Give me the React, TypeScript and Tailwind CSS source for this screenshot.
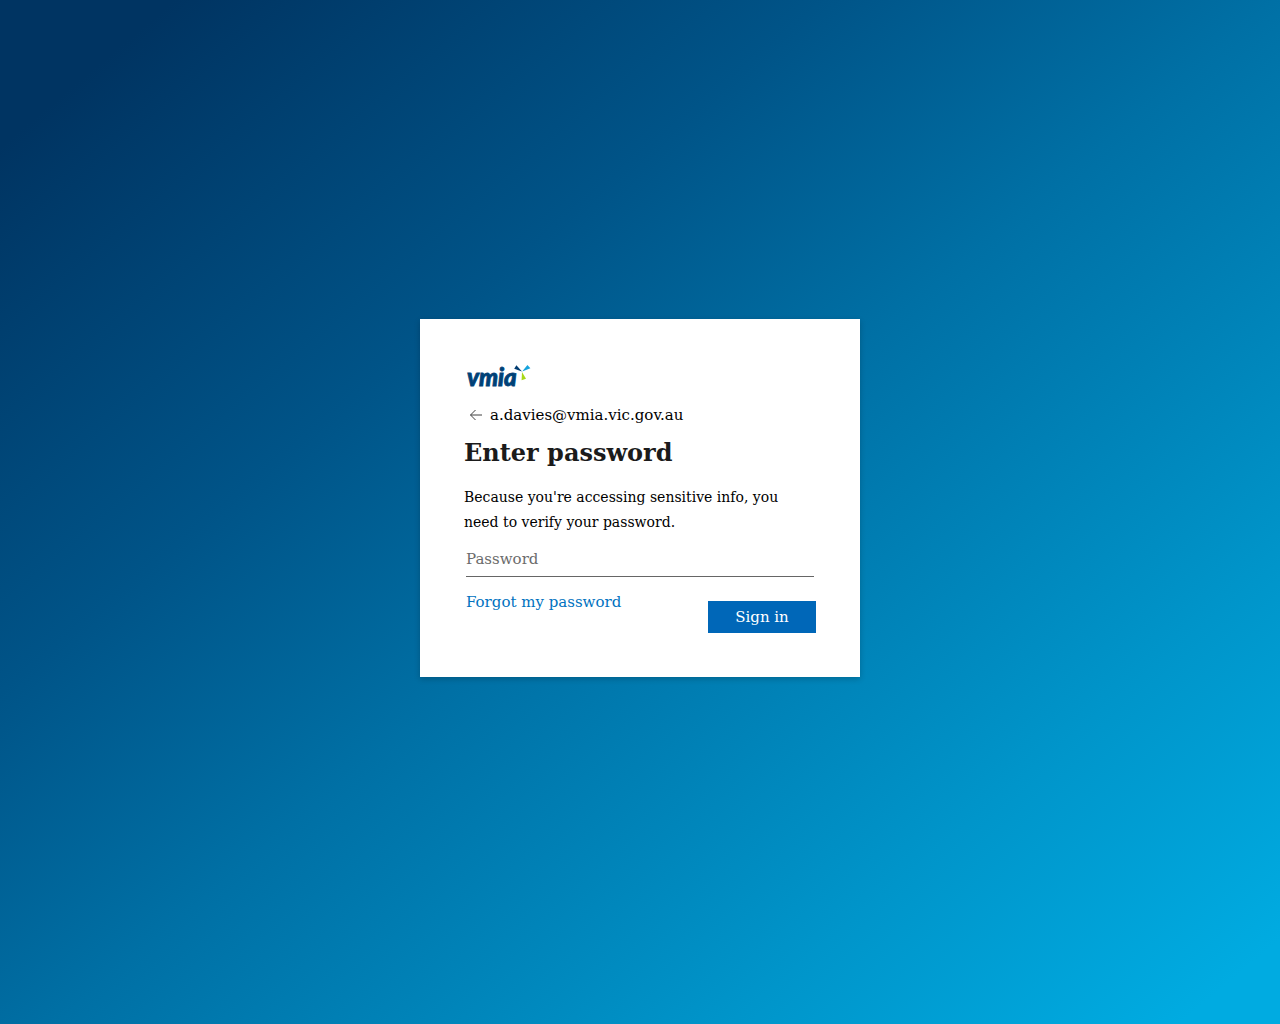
import { useState } from "react";

function Logo() {
  return (
    <svg
      role="img"
      aria-label="vmia"
      width="72"
      height="32"
      viewBox="0 0 72 32"
      className="block overflow-visible"
    >
      <text
        x="3"
        y="23"
        fontFamily="Lato, 'Open Sans', sans-serif"
        fontSize="24"
        fontWeight="900"
        fontStyle="italic"
        fill="#004177"
        stroke="#004177"
        strokeWidth="0.8"
      >
        vmia
      </text>
      {/* pinwheel */}
      <path d="M50.2 5.8 L52.4 2.2 L58 8.4 Z" fill="#003c71" />
      <path d="M58.2 8.4 L63.4 2 L66.4 5.2 Z" fill="#16a3dc" />
      <path d="M58 9 L62 15.8 L57.6 17.2 Z" fill="#a8d817" />
    </svg>
  );
}

function BackArrow() {
  return (
    <svg
      width="24"
      height="24"
      viewBox="0 0 24 24"
      fill="none"
      stroke="#404040"
      strokeWidth="1"
      aria-hidden="true"
    >
      <path d="M6.5 12 H18 M11.5 7 L6.5 12 L11.5 17" />
    </svg>
  );
}

export default function App() {
  const [password, setPassword] = useState("");

  return (
    <main className="flex min-h-screen items-center justify-center bg-[linear-gradient(140deg,#003462_7%,#005488_33%,#0070a5_51%,#0095ca_78%,#00abe1_96%)] pb-7 font-['DejaVu_Serif',serif] text-[15px] text-black">
      <form
        className="w-full max-w-[440px] bg-white p-11 shadow-[0_2px_6px_rgba(0,0,0,0.2)]"
        onSubmit={(e) => e.preventDefault()}
      >
        <Logo />

        <div className="mt-2 flex h-6 items-center gap-0.5">
          <button type="button" aria-label="Back">
            <BackArrow />
          </button>
          <span>a.davies@vmia.vic.gov.au</span>
        </div>

        <h1 className="mt-2 text-2xl leading-9 font-bold text-[#1b1b1b]">
          Enter password
        </h1>

        <p className="mt-3.5 text-sm leading-[25px]">
          Because you're accessing sensitive info, you need to verify your
          password.
        </p>

        <div className="mt-1.5 px-0.5">
          <input
            type="password"
            aria-label="Password"
            placeholder="Password"
            value={password}
            onChange={(e) => setPassword(e.target.value)}
            className="block h-9 w-full border-b border-[#666666] outline-none placeholder:text-[#6b6b6b]"
          />
        </div>

        <div className="mt-4 flex items-start justify-between pl-0.5">
          <a href="#" className="leading-[18px] text-[#0072c0]">
            Forgot my password
          </a>
          <button
            type="submit"
            className="mt-2 h-8 w-[108px] bg-[#0067b8] text-white"
          >
            Sign in
          </button>
        </div>
      </form>
    </main>
  );
}
